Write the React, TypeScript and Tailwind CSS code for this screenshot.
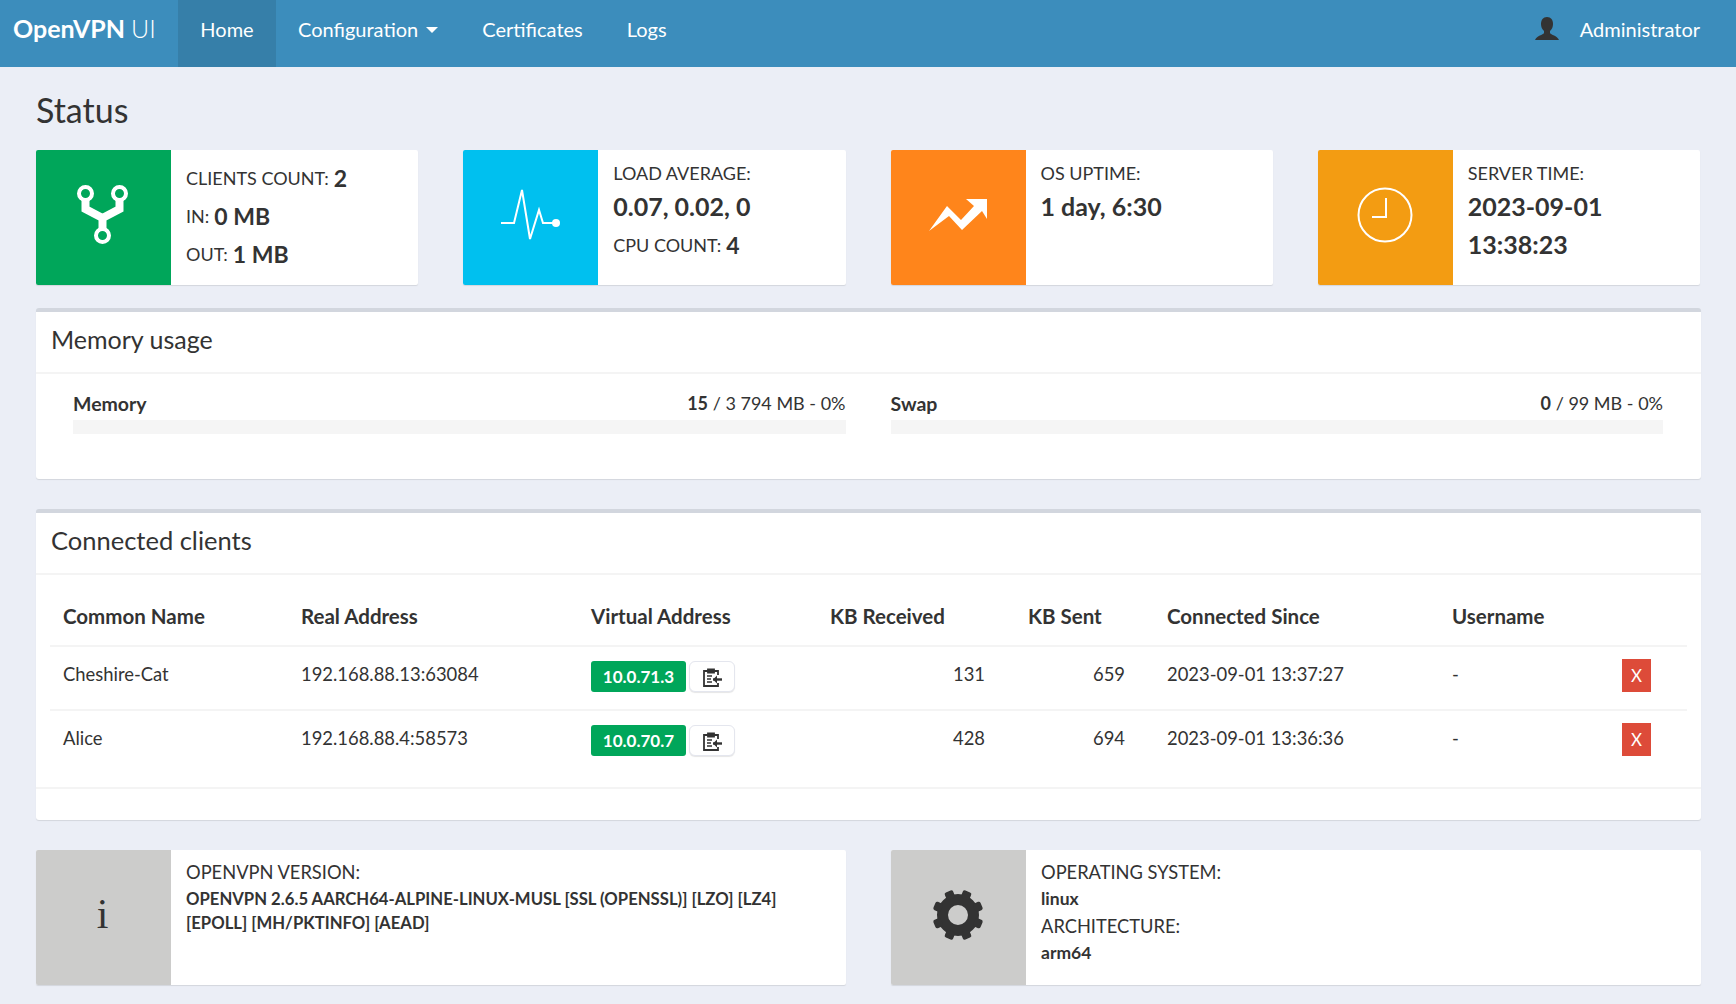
const FONT = "font-['Lato','Noto_Sans',sans-serif]";

function ClientsIcon() {
  return (
    <svg className="mr-[2px]" width="51" height="59" viewBox="0 0 51 59" fill="none" stroke="white">
      <circle cx="8.5" cy="8.5" r="6.5" strokeWidth="4" />
      <circle cx="42.5" cy="8.5" r="6.5" strokeWidth="4" />
      <circle cx="25.5" cy="50.5" r="6.5" strokeWidth="4" />
      <path d="M8.5 14V24L25.5 33L42.5 24V14M25.5 33V45" strokeWidth="8" />
    </svg>
  );
}

function PulseIcon() {
  return (
    <svg width="60" height="54" viewBox="0 0 60 54" fill="none" stroke="white">
      <path d="M0 35H13L21 2L29 51L38 22L42 35H52" strokeWidth="2" />
      <circle cx="55" cy="35" r="4" fill="white" stroke="none" />
    </svg>
  );
}

function TrendIcon() {
  return (
    <svg width="58" height="32" viewBox="0 0 58 32" fill="white">
      <path d="M0 32L18 7L32 21L45 7L37 0H58V20L53 12L33 31L20 17Z" />
    </svg>
  );
}

function ClockIcon() {
  return (
    <svg width="56" height="56" viewBox="0 0 56 56" fill="none" stroke="white" strokeWidth="2">
      <circle cx="28" cy="28" r="26.5" />
      <path d="M29 11V30H15" />
    </svg>
  );
}

function GearIcon() {
  const angles = [22.5, 67.5, 112.5, 157.5, 202.5, 247.5, 292.5, 337.5];
  return (
    <svg className="mr-[2px]" width="52" height="52" viewBox="0 0 52 52" fill="#333333">
      <circle cx="26" cy="26" r="15.5" fill="none" stroke="#333333" strokeWidth="11" />
      {angles.map((a) => (
        <rect key={a} x="21.5" y="0.5" width="9" height="8" rx="2" transform={`rotate(${a} 26 26)`} />
      ))}
    </svg>
  );
}

function UserIcon() {
  return (
    <svg width="24" height="24" viewBox="0 0 24 24" fill="#333333">
      <path d="M12 0C8 0 6 3 6 7C6 10 7 12 9 14V16C8 18 2 18.5 0 23H24C22 18.5 16 18 15 16V14C17 12 18 10 18 7C18 3 16 0 12 0Z" />
    </svg>
  );
}

function ClipboardIcon() {
  return (
    <svg width="20" height="20" viewBox="0 0 20 20" fill="none" stroke="#333333" strokeWidth="1.8">
      <path d="M12 4H16V8M16 16V19H2V4H6" />
      <path d="M6 2.5H12V5.5H6Z" fill="#333333" />
      <path d="M5 9H10M5 12H9M5 15H10" strokeWidth="1.4" />
      <path d="M11 12.5H20" strokeWidth="2.4" />
      <path d="M15 8.5L11 12.5L15 16.5" fill="#333333" stroke="none" />
    </svg>
  );
}

function InfoBox({ color, icon, pad, children }: { color: string; icon: React.ReactNode; pad: string; children: React.ReactNode }) {
  return (
    <div className="flex h-[135px] overflow-hidden rounded-[2px] bg-white shadow-[0_1px_1px_rgba(0,0,0,0.1)]">
      <div className={`flex w-[135px] shrink-0 items-center justify-center pb-[6px] ${color}`}>{icon}</div>
      <div className={`min-w-0 flex-1 px-[15px] ${pad}`}>{children}</div>
    </div>
  );
}

function Line({ label, value }: { label: string; value: string }) {
  return (
    <div className="flex h-[38px] items-center text-[18px]">
      <span>{label}</span>
      <b className="ml-[5px] text-[23px] font-bold">{value}</b>
    </div>
  );
}

function Big({ children }: { children: React.ReactNode }) {
  return <div className="flex h-[38px] items-center text-[25px] font-bold">{children}</div>;
}

function Label({ children }: { children: React.ReactNode }) {
  return <div className="flex h-[29px] items-center text-[18px]">{children}</div>;
}

function Bar({ name, value, rest }: { name: string; value: string; rest: string }) {
  return (
    <div>
      <div className="flex h-[27px] items-center justify-between text-[18px]">
        <b className="text-[19.5px] font-bold">{name}</b>
        <span>
          <b className="font-bold">{value}</b> {rest}
        </span>
      </div>
      <div className="mt-[3px] h-[14px] bg-[#f5f5f5]" />
    </div>
  );
}

const CLIENTS = [
  { name: "Cheshire-Cat", real: "192.168.88.13:63084", virtual: "10.0.71.3", rx: "131", tx: "659", since: "2023-09-01 13:37:27" },
  { name: "Alice", real: "192.168.88.4:58573", virtual: "10.0.70.7", rx: "428", tx: "694", since: "2023-09-01 13:36:36" },
];

export default function App() {
  return (
    <div className={`${FONT} min-h-screen bg-[#ebeef6] text-[18px] text-[#333333]`}>
      <header className="flex h-[67px] items-stretch bg-[#3c8dbc] text-white">
        <div className="flex w-[178px] items-center pb-[9px] pl-[13px] text-[25px]">
          <b className="font-bold">OpenVPN</b>
          <span className="ml-[6px] font-light">UI</span>
        </div>
        <nav className="flex">
          <a className="flex w-[98px] items-center justify-center bg-[#367fa9] pb-[9px] text-[20px]">Home</a>
          <a className="flex items-center px-[22px] pb-[9px] text-[20px]">
            Configuration
            <span className="ml-[8px] mt-[2px] border-x-[6px] border-t-[6px] border-x-transparent border-t-white" />
          </a>
          <a className="flex items-center px-[22px] pb-[9px] text-[20px]">Certificates</a>
          <a className="flex items-center px-[22px] pb-[9px] text-[20px]">Logs</a>
        </nav>
        <div className="ml-auto flex items-center pb-[9px] pr-[36px] text-[20px]">
          <UserIcon />
          <span className="ml-[21px]">Administrator</span>
        </div>
      </header>

      <main className="pl-[36px] pr-[35px]">
        <h1 className="flex h-[83px] items-center pt-[2px] text-[34px] font-normal leading-none">Status</h1>

        <section className="mr-[1px] grid grid-cols-4 gap-x-[45px]">
          <InfoBox color="bg-[#00a65a]" icon={<ClientsIcon />} pad="pt-[9px]">
            <Line label="CLIENTS COUNT:" value="2" />
            <Line label="IN:" value="0 MB" />
            <Line label="OUT:" value="1 MB" />
          </InfoBox>
          <InfoBox color="bg-[#00c0ef]" icon={<PulseIcon />} pad="pt-[9px]">
            <Label>LOAD AVERAGE:</Label>
            <Big>0.07, 0.02, 0</Big>
            <Line label="CPU COUNT:" value="4" />
          </InfoBox>
          <InfoBox color="bg-[#ff851b]" icon={<TrendIcon />} pad="pt-[9px]">
            <Label>OS UPTIME:</Label>
            <Big>1 day, 6:30</Big>
          </InfoBox>
          <InfoBox color="bg-[#f39c12]" icon={<ClockIcon />} pad="pt-[9px]">
            <Label>SERVER TIME:</Label>
            <Big>2023-09-01</Big>
            <Big>13:38:23</Big>
          </InfoBox>
        </section>

        <section className="mt-[23px] h-[171px] rounded-[3px] border-t-[4px] border-[#d2d6de] bg-white shadow-[0_1px_1px_rgba(0,0,0,0.1)]">
          <h2 className="flex h-[62px] items-center border-b-2 border-[#f4f4f4] px-[15px] pb-[5px] text-[25px] font-normal">Memory usage</h2>
          <div className="grid grid-cols-2 gap-x-[45px] pl-[37px] pr-[38px] pt-[16px]">
            <Bar name="Memory" value="15" rest="/ 3 794 MB - 0%" />
            <Bar name="Swap" value="0" rest="/ 99 MB - 0%" />
          </div>
        </section>

        <section className="mt-[30px] h-[311px] rounded-[3px] border-t-[4px] border-[#d2d6de] bg-white shadow-[0_1px_1px_rgba(0,0,0,0.1)]">
          <h2 className="flex h-[62px] items-center border-b-2 border-[#f4f4f4] px-[15px] pb-[5px] text-[25.5px] font-normal">Connected clients</h2>
          <div className="border-b-2 border-[#f4f4f4] px-[14px] pt-[14px]">
            <table className="w-full border-collapse text-left text-[18.4px]">
              <thead>
                <tr className="h-[57px] border-b-2 border-[#f4f4f4] text-[20.5px]">
                  <th className="w-[238px] pb-[2px] pl-[13px] font-bold">Common Name</th>
                  <th className="w-[289px] pb-[2px] pl-[13px] font-bold">Real Address</th>
                  <th className="w-[240px] pb-[2px] pl-[14px] font-bold">Virtual Address</th>
                  <th className="w-[198px] pb-[2px] pl-[13px] font-bold">KB Received</th>
                  <th className="w-[139px] pb-[2px] pl-[13px] font-bold">KB Sent</th>
                  <th className="w-[285px] pb-[2px] pl-[13px] font-bold">Connected Since</th>
                  <th className="pb-[2px] pl-[13px] font-bold">Username</th>
                  <th className="w-[78px]" />
                </tr>
              </thead>
              <tbody>
                {CLIENTS.map((client, i) => (
                  <tr key={client.name} className={i === 0 ? "h-[64px] border-b-2 border-[#f4f4f4]" : "h-[77px]"}>
                    <td className="pl-[13px] pt-[14px] align-top">{client.name}</td>
                    <td className="pl-[13px] pt-[14px] align-top">{client.real}</td>
                    <td className="pl-[14px] pt-[14px] align-top">
                      <div className="flex items-start gap-[3px]">
                        <span className="flex h-[31px] w-[95px] items-center justify-center rounded-[3px] bg-[#00a65a] text-[17px] font-bold text-white">
                          {client.virtual}
                        </span>
                        <span className="flex h-[31px] w-[46px] items-center justify-center rounded-[6px] border border-[#e4e6ee] bg-white shadow-[0_1px_1px_rgba(0,0,0,0.1)]">
                          <ClipboardIcon />
                        </span>
                      </div>
                    </td>
                    <td className="pr-[30px] pt-[14px] text-right align-top">{client.rx}</td>
                    <td className="pr-[29px] pt-[14px] text-right align-top">{client.tx}</td>
                    <td className="pl-[13px] pt-[14px] align-top">{client.since}</td>
                    <td className="pl-[13px] pt-[14px] align-top">-</td>
                    <td className="pl-[13px] pt-[12px] align-top">
                      <span className="flex h-[33px] w-[29px] items-center justify-center bg-[#dd4b39] text-[17px] text-white">X</span>
                    </td>
                  </tr>
                ))}
              </tbody>
            </table>
          </div>
        </section>

        <section className="mt-[30px] grid grid-cols-2 gap-x-[45px]">
          <InfoBox
            color="bg-[#cccccb]"
            icon={<span className="mr-[2px] font-['Liberation_Serif',serif] text-[42px] font-normal">i</span>}
            pad="pt-[8px]"
          >
            <div className="text-[18.3px] leading-[29px]">OPENVPN VERSION:</div>
            <div className="pr-[30px] text-[16.7px] font-bold leading-[24px]">
              OPENVPN 2.6.5 AARCH64-ALPINE-LINUX-MUSL [SSL (OPENSSL)] [LZO] [LZ4] [EPOLL] [MH/PKTINFO] [AEAD]
            </div>
          </InfoBox>
          <InfoBox color="bg-[#cccccb]" icon={<GearIcon />} pad="pt-[8px]">
            <div className="text-[18.3px] leading-[28px]">OPERATING SYSTEM:</div>
            <div className="text-[17.5px] font-bold leading-[26px]">linux</div>
            <div className="text-[18.3px] leading-[28px]">ARCHITECTURE:</div>
            <div className="text-[17.5px] font-bold leading-[26px]">arm64</div>
          </InfoBox>
        </section>
      </main>
    </div>
  );
}
